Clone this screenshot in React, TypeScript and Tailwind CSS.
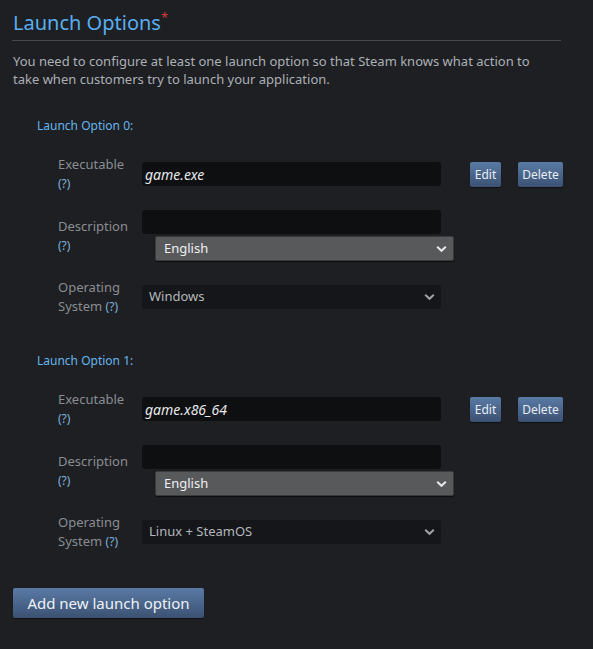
import React from "react";

const font = { fontFamily: '"Noto Sans", "Open Sans", Arial, sans-serif' };

function Chevron() {
  return (
    <svg width="11" height="7" viewBox="0 0 11 7" className="absolute right-[6px] top-1/2 -translate-y-1/2">
      <path d="M1.2 1.2 L5.5 5.3 L9.8 1.2" fill="none" stroke="currentColor" strokeWidth="2" />
    </svg>
  );
}

function Btn({ children, w }: { children: React.ReactNode; w: string }) {
  return (
    <div className={`${w} h-[25px] flex items-center justify-center rounded-[2px] bg-gradient-to-b from-[#5a7ba6] to-[#3b5172] text-[#e8edf3] text-[12px] shadow-[0_1px_1px_rgba(0,0,0,0.5)]`}>
      {children}
    </div>
  );
}

function Label({ a, b, inline }: { a: string; b?: string; inline?: boolean }) {
  return (
    <div className="w-[84px] shrink-0 flex flex-col justify-center text-[13px] leading-[19px] text-[#8a8d92]">
      <div>{a}</div>
      {inline ? (
        <div>
          {b} <span className="text-[#7fb2db] text-[12px]">(?)</span>
        </div>
      ) : (
        <div className="text-[#7fb2db] text-[12px]">(?)</div>
      )}
    </div>
  );
}

function Option({ idx, exe, os }: { idx: number; exe: string; os: string }) {
  return (
    <div>
      <div className="pl-[37px] h-[20px] flex items-center text-[12px] text-[#66b5ee]">Launch Option {idx}:</div>
      <div className="pl-[58px] mt-[26px] flex flex-col gap-[24px]">
        <div className="flex h-[24px]">
          <Label a="Executable" />
          <div className="w-[299px] h-[24px] bg-[#0e0f11] rounded-[3px] flex items-center pl-[3px] italic text-[14px] text-[#e6e8ea]">
            {exe}
          </div>
          <div className="ml-[29px]">
            <Btn w="w-[31px]">Edit</Btn>
          </div>
          <div className="ml-[17px]">
            <Btn w="w-[45px]">Delete</Btn>
          </div>
        </div>
        <div className="flex">
          <Label a="Description" />
          <div>
            <div className="w-[299px] h-[24px] bg-[#0e0f11] rounded-[3px]" />
            <div className="relative ml-[13px] mt-[2px] w-[299px] h-[25px] bg-[#58595b] border border-[#3a3b3d] rounded-[2px] flex items-center pl-[8px] text-[13px] text-[#eef0f2] shadow-[0_1px_1px_rgba(0,0,0,0.6)]">
              English
              <span className="text-[#e8e8e8]"><Chevron /></span>
            </div>
          </div>
        </div>
        <div className="flex h-[24px]">
          <Label a="Operating" b="System" inline />
          <div className="relative w-[299px] h-[24px] bg-[#141619] rounded-[3px] flex items-center pl-[7px] text-[13px] text-[#b4b7ba]">
            {os}
            <span className="text-[#a0a3a6]"><Chevron /></span>
          </div>
        </div>
      </div>
    </div>
  );
}

export default function App() {
  return (
    <div className="w-[593px] h-[649px] bg-[#1d1f23] overflow-hidden" style={font}>
      <div className="pl-[13px] pt-[9px]">
        <div className="text-[20px] leading-[28px] text-[#5aaef0] flex">
          <span>Launch Options</span>
          <span className="text-[#d23a3a] text-[13px] leading-[13px] mt-[2px]">*</span>
        </div>
        <div className="mt-[3px] h-px bg-[#45484d] w-[549px] -ml-[1px]" />
        <p className="mt-[11px] w-[528px] text-[13px] leading-[18px] text-[#acb0b5]">
          You need to configure at least one launch option so that Steam knows what action to take when customers try to launch your application.
        </p>
      </div>
      <div className="mt-[28px]">
        <Option idx={0} exe="game.exe" os="Windows" />
      </div>
      <div className="mt-[42px]">
        <Option idx={1} exe="game.x86_64" os="Linux + SteamOS" />
      </div>
      <div className="pl-[13px] mt-[44px]">
        <div className="w-[191px] h-[30px] rounded-[2px] bg-gradient-to-b from-[#5a7ba6] to-[#3b5172] text-[#eef2f6] text-[15px] flex items-center justify-center shadow-[0_1px_1px_rgba(0,0,0,0.5)]">
          Add new launch option
        </div>
      </div>
    </div>
  );
}
